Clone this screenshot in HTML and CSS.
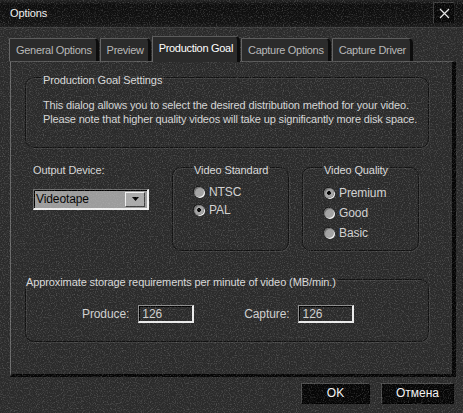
FILE: index.html
```html
<!DOCTYPE html>
<html lang="en">
<head>
  <meta charset="UTF-8" />
  <title>Options</title>
  <link rel="stylesheet" href="styles.css">
</head>
<body>
<div class="window">

  <div class="titlebar">
    <span class="title">Options</span>
    <button class="close" type="button" aria-label="Close">
      <svg width="11" height="11" viewBox="0 0 11 11"><path d="M1 1 L10 10 M10 1 L1 10" stroke="#e8e8e8" stroke-width="1.2" fill="none"/></svg>
    </button>
  </div>

  <div class="tabs">
    <div class="tab">General Options</div>
    <div class="tab">Preview</div>
    <div class="tab active">Production Goal</div>
    <div class="tab">Capture Options</div>
    <div class="tab">Capture Driver</div>
  </div>

  <div class="panel">
    <fieldset class="group intro">
      <legend>Production Goal Settings</legend>
      <p>This dialog allows you to select the desired distribution method for your video.</p>
      <p>Please note that higher quality videos will take up significantly more disk space.</p>
    </fieldset>

    <div class="row">
      <div class="device">
        <label class="caption">Output Device:</label>
        <div class="select">
          <span class="value">Videotape</span>
          <span class="drop"><svg width="7" height="4" viewBox="0 0 7 4"><path d="M0 0 H7 L3.5 4 Z" fill="#000"/></svg></span>
        </div>
      </div>

      <fieldset class="group choice standard">
        <legend>Video Standard</legend>
        <label class="option"><input type="radio" name="standard"> NTSC</label>
        <label class="option"><input type="radio" name="standard" checked> PAL</label>
      </fieldset>

      <fieldset class="group choice quality">
        <legend>Video Quality</legend>
        <label class="option"><input type="radio" name="quality" checked> Premium</label>
        <label class="option"><input type="radio" name="quality"> Good</label>
        <label class="option"><input type="radio" name="quality"> Basic</label>
      </fieldset>
    </div>

    <fieldset class="group storage">
      <legend>Approximate storage requirements per minute of video (MB/min.)</legend>
      <div class="sizes">
        <label class="size">Produce: <input type="text" value="126" readonly></label>
        <label class="size">Capture: <input type="text" value="126" readonly></label>
      </div>
    </fieldset>
  </div>

  <div class="actions">
    <button type="button" class="btn ok">OK</button>
    <button type="button" class="btn">Отмена</button>
  </div>

  <!-- grain over the whole dialog skin -->
  <svg class="grain" width="463" height="413">
    <filter id="grainNoise">
      <feTurbulence type="fractalNoise" baseFrequency="0.85" numOctaves="2" seed="3"/>
      <feColorMatrix type="matrix" values="0 0 0 0 0.6  0 0 0 0 0.6  0 0 0 0 0.6  0 0 0 1.6 -0.75"/>
    </filter>
    <rect width="100%" height="100%" filter="url(#grainNoise)"/>
  </svg>
</div>
</body>
</html>
```

FILE: styles.css
```css
body {
  margin: 0;
  background: #2b2b2b;
  font-family: "Liberation Sans", Arial, sans-serif;
  font-size: 11px;
  letter-spacing: -0.1px;
  color: #d6d6d6;
}
.window {
  position: relative;
  width: 463px;
  height: 413px;
  overflow: hidden;
  background: #2b2b2b;
}
.grain {
  position: absolute;
  left: 0;
  top: 0;
  pointer-events: none;
  opacity: 0.4;
}

/* title bar */
.titlebar {
  height: 28px;
  box-sizing: border-box;
  display: flex;
  align-items: center;
  justify-content: space-between;
  padding: 0 8px 1px 10px;
  background: linear-gradient(#242424, #0d0d0d 18%, #121212 85%, #1c1c1c);
  border-bottom: 1px solid #3c3c3c;
}
.title {
  color: #f2f2f2;
  font-size: 11px;
}
.close {
  width: 22px;
  height: 22px;
  padding: 0;
  display: flex;
  align-items: center;
  justify-content: center;
  background: #070707;
  border: 1px solid #3a3a3a;
  border-right-color: #1a1a1a;
  border-bottom-color: #1a1a1a;
}

/* tabs */
.tabs {
  display: flex;
  align-items: flex-end;
  height: 25px;
  margin: 8px 0 0 9px;
  position: relative;
  z-index: 1;
}
.tab {
  height: 23px;
  box-sizing: border-box;
  display: flex;
  align-items: center;
  padding: 0 4px 1px 6px;
  margin-right: 1px;
  font-size: 11px;
  letter-spacing: -0.3px;
  color: #b8b8b8;
  border-top: 1px solid #5c5c5c;
  border-left: 1px solid #666;
  border-right: 3px solid #0c0c0c;
  border-top-right-radius: 5px;
  background: #2b2b2b;
}
.tab.active {
  height: 26px;
  margin-bottom: -1px;
  color: #ffffff;
  padding-bottom: 3px;
}

/* page frame */
.panel {
  width: 446px;
  height: 316px;
  box-sizing: border-box;
  margin-left: 10px;
  padding: 6px 0 0 14px;
  border-top: 1px solid #555;
  border-left: 1px solid #666;
  border-right: 4px solid #050505;
  border-bottom: 3px solid #050505;
}

/* etched rounded group boxes */
.group {
  margin: 0;
  box-sizing: border-box;
  border: 1px solid #101010;
  border-radius: 9px;
  box-shadow: inset 1px 1px 0 #3d3d3d, 1px 1px 0 #3d3d3d;
}
.group legend {
  padding: 5px 2px 0;
  margin-left: -2px;
  line-height: 14px;
  color: #dadada;
}
.intro {
  width: 404px;
  height: 80px;
  padding: 11px 4px 0 17px;
}
.intro p {
  margin: 0;
  line-height: 14px;
  white-space: nowrap;
  letter-spacing: -0.15px;
}

.row {
  display: flex;
  margin-top: 10px;
  height: 93px;
}
.device {
  width: 147px;
  padding: 5px 0 0 8px;
  box-sizing: border-box;
}
.caption {
  display: block;
  line-height: 14px;
  margin-bottom: 12px;
}
.select {
  width: 116px;
  height: 21px;
  box-sizing: border-box;
  display: flex;
  align-items: center;
  justify-content: space-between;
  padding: 0 2px 0 1px;
  background: #9c9c9c;
  border-top: 1px solid #6a6a6a;
  border-left: 1px solid #6a6a6a;
  border-right: 2px solid #f2f2f2;
  border-bottom: 2px solid #f2f2f2;
  box-shadow: inset 1px 1px 0 #000;
  color: #000;
  font-size: 12px;
}
.select .value {
  padding: 0 0 1px 1px;
}
.drop {
  width: 20px;
  height: 15px;
  box-sizing: border-box;
  display: flex;
  align-items: center;
  justify-content: center;
  background: #aaaaaa;
  border-top: 1px solid #f0f0f0;
  border-left: 1px solid #f0f0f0;
  border-right: 1px solid #404040;
  border-bottom: 1px solid #404040;
}

.choice {
  height: 93px;
  display: flex;
  flex-direction: column;
}
.standard {
  width: 117px;
  margin-right: 13px;
  padding: 8px 0 0 21px;
  gap: 4px;
}
.quality {
  width: 117px;
  padding: 9px 0 0 21px;
  gap: 6px;
}
.option {
  display: flex;
  align-items: center;
  gap: 5px;
  height: 14px;
  font-size: 12px;
  color: #d2d2d2;
}
.option input {
  appearance: none;
  margin: 0;
  width: 10px;
  height: 10px;
  border-radius: 50%;
  background: #a2a2a2;
  box-shadow: -1px -1px 0 #1a1a1a, 1px 1px 0 #f4f4f4, inset 1px 1px 0 #6e6e6e;
}
.option input:checked {
  background: radial-gradient(circle, #000 0 1.6px, #a2a2a2 2.2px);
}

.storage {
  width: 404px;
  height: 72px;
  margin-top: 19px;
  padding: 16px 0 0 0;
}
.sizes {
  display: flex;
  padding-left: 56px;
  gap: 50px;
}
.size {
  display: flex;
  align-items: center;
  gap: 9px;
  color: #d0d0d0;
  font-size: 12px;
}
.size input {
  width: 56px;
  height: 18px;
  box-sizing: border-box;
  padding: 1px 0 0 3px;
  font: inherit;
  color: #cfcfcf;
  background: #2b2b2b;
  border-top: 1px solid #8c8c8c;
  border-left: 1px solid #8c8c8c;
  border-right: 2px solid #ececec;
  border-bottom: 2px solid #ececec;
  box-shadow: inset 1px 1px 0 #000;
  outline: none;
}

/* dialog buttons */
.actions {
  display: flex;
  justify-content: flex-end;
  gap: 11px;
  padding: 6px 9px 0 0;
}
.btn {
  width: 73px;
  height: 21px;
  padding: 0 0 1px;
  font: inherit;
  font-size: 12px;
  color: #f4f4f4;
  background: #060606;
  border: 1px solid #4a4a4a;
  border-right-color: #000;
  border-bottom-color: #000;
}
.btn.ok {
  width: 69px;
}
```
